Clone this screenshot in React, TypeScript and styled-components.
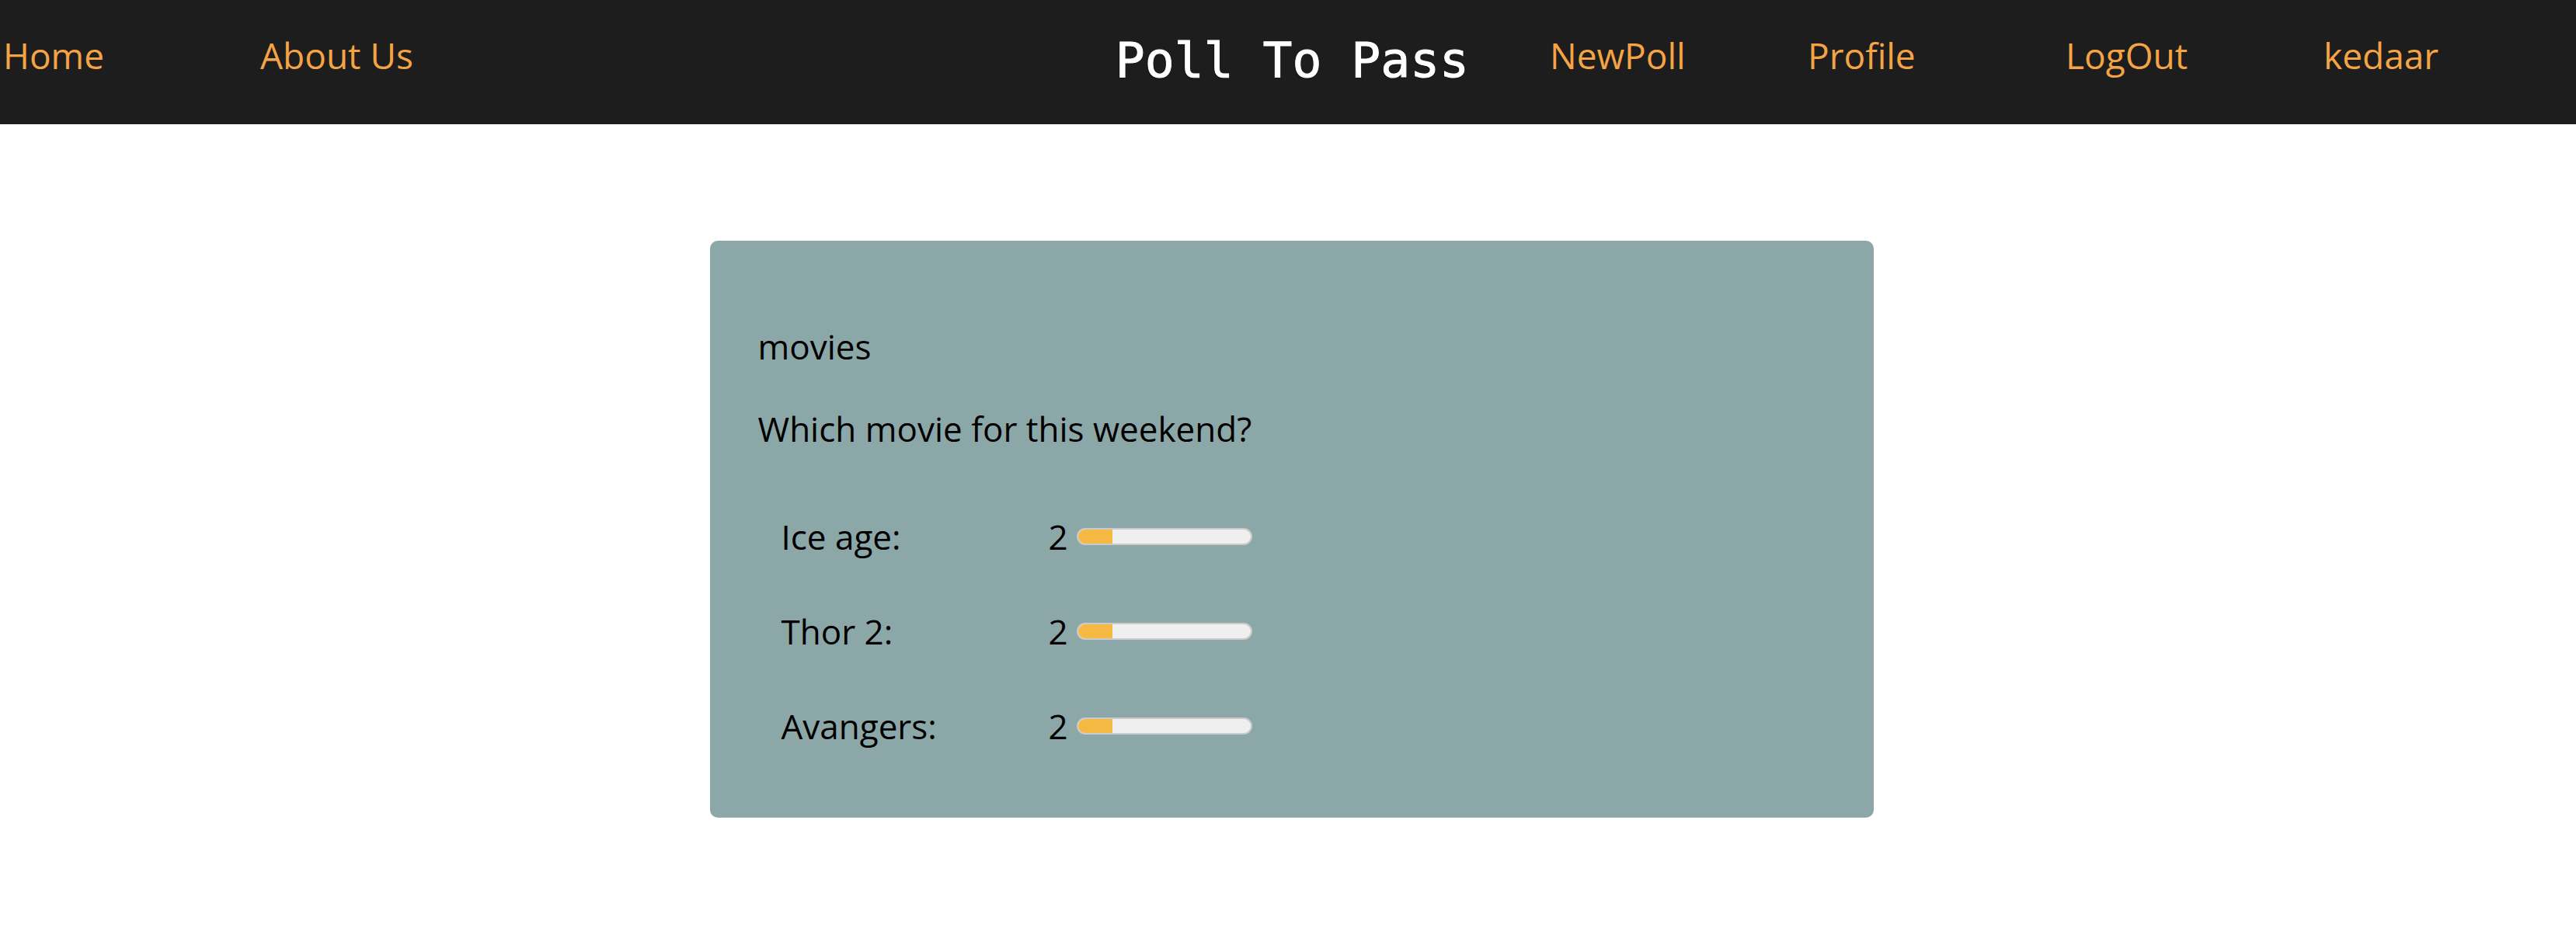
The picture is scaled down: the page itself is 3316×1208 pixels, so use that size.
import React from "react";
import styled, { createGlobalStyle } from "styled-components";

const GlobalStyle = createGlobalStyle`
  html, body {
    margin: 0;
    padding: 0;
    background: #ffffff;
    font-family: "Open Sans", "Noto Sans", sans-serif;
  }
  * { box-sizing: border-box; }
`;

const NavBar = styled.nav`
  display: flex;
  align-items: center;
  height: 160px;
  background: #1d1d1d;
  padding-left: 4px;
  overflow: hidden;
`;

const NavLink = styled.a`
  flex: 0 0 331px;
  padding-bottom: 18px;
  font-family: "Open Sans", sans-serif;
  font-size: 46px;
  color: #f4a444;
  text-decoration: none;
  white-space: nowrap;
`;

const TitleSlot = styled.div`
  flex: 0 0 1329px;
  display: flex;
  justify-content: flex-end;
  padding-right: 104px;
  padding-bottom: 6px;
`;

const Title = styled.h1`
  margin: 0;
  font-family: "DejaVu Sans Mono", monospace;
  font-size: 63px;
  font-weight: 400;
  color: #ffffff;
  -webkit-text-stroke: 1px #ffffff;
  text-shadow: -1px 1px 1px rgba(0, 0, 0, 0.7);
  white-space: nowrap;
`;

const RightGroup = styled.div`
  display: flex;
  flex: 1 0 auto;
`;

const RightLink = styled(NavLink)`
  flex: 0 0 332px;
`;

const Main = styled.main`
  display: flex;
  justify-content: center;
  padding-top: 150px;
  padding-left: 9px;
`;

const Card = styled.section`
  width: 1498px;
  height: 743px;
  background: #8ca7a8;
  border-radius: 10px;
  padding: 58px 58px 57px 62px;
  color: #000;
  font-family: "Open Sans", sans-serif;
  font-size: 44px;
`;

const Category = styled.p`
  margin: 48px 0 0;
  line-height: 60px;
`;

const Question = styled.p`
  margin: 46px 0 0;
  line-height: 60px;
`;

const Options = styled.div`
  display: flex;
  flex-direction: column;
  margin-top: 48px;
  padding-left: 30px;
`;

const OptionRow = styled.div`
  display: flex;
  align-items: center;
  height: 122px;
  line-height: 60px;
`;

const OptionLabel = styled.span`
  width: 344px;
`;

const Count = styled.span`
  width: 25px;
`;

const Meter = styled.div`
  margin-left: 11px;
  width: 226px;
  height: 22px;
  border: 2px solid #cbcbcb;
  border-radius: 11px;
  background: #efefef;
  overflow: hidden;
  display: flex;
`;

const MeterFill = styled.div`
  height: 100%;
  background: #f4b942;
`;

const options = [
  { label: "Ice age:", votes: 2 },
  { label: "Thor 2:", votes: 2 },
  { label: "Avangers:", votes: 2 },
];

export default function App() {
  return (
    <>
      <GlobalStyle />
      <NavBar>
        <NavLink href="#">Home</NavLink>
        <NavLink href="#">About Us</NavLink>
        <TitleSlot>
          <Title>Poll To Pass</Title>
        </TitleSlot>
        <RightGroup>
          <RightLink href="#">NewPoll</RightLink>
          <RightLink href="#">Profile</RightLink>
          <RightLink href="#">LogOut</RightLink>
          <RightLink href="#">kedaar</RightLink>
        </RightGroup>
      </NavBar>
      <Main>
        <Card>
          <Category>movies</Category>
          <Question>Which movie for this weekend?</Question>
          <Options>
            {options.map((o) => (
              <OptionRow key={o.label}>
                <OptionLabel>{o.label}</OptionLabel>
                <Count>{o.votes}</Count>
                <Meter>
                  <MeterFill style={{ width: `${(o.votes / 10) * 100}%` }} />
                </Meter>
              </OptionRow>
            ))}
          </Options>
        </Card>
      </Main>
    </>
  );
}
